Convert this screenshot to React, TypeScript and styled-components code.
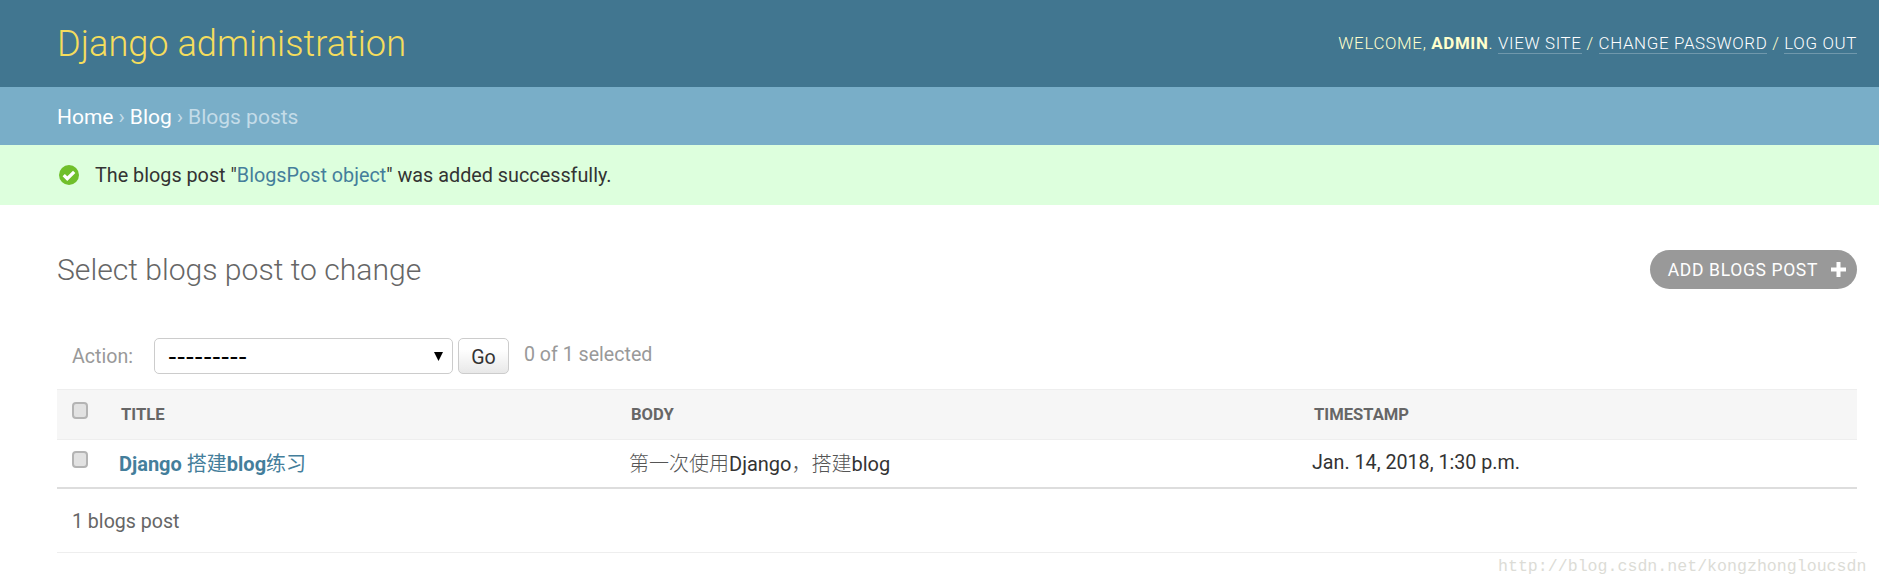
import React from 'react'
import styled, { createGlobalStyle } from 'styled-components'

const GlobalStyle = createGlobalStyle`
  html, body {
    margin: 0;
    padding: 0;
    background: #fff;
    color: #333;
    font-family: Roboto, "Noto Sans CJK SC", sans-serif;
    font-size: 19.6px;
  }
`

const Page = styled.div`
  position: relative;
  height: 588px;
  overflow: hidden;
`

const Header = styled.div`
  display: flex;
  justify-content: space-between;
  align-items: center;
  height: 87px;
  padding: 0 22px 0 57px;
  background: #417690;
`

const Branding = styled.h1`
  margin: 0;
  font-size: 36.2px;
  font-weight: 300;
  color: #f5dd5d;
`

const UserTools = styled.div`
  margin-top: -2px;
  font-size: 16.9px;
  font-weight: 300;
  letter-spacing: 0.65px;
  color: #ffc;
  text-transform: uppercase;

  strong {
    font-weight: 700;
  }
`

const ToolLink = styled.a`
  color: #fff;
  border-bottom: 1px solid rgba(255, 255, 255, 0.25);
`

const Breadcrumbs = styled.div`
  height: 58px;
  padding: 2px 57px 0;
  box-sizing: border-box;
  display: flex;
  align-items: center;
  gap: 5px;
  background: #79aec8;
  font-size: 21px;
  color: #c4dce8;
`

const Crumb = styled.a`
  color: #fff;
`

const Message = styled.div`
  display: flex;
  align-items: center;
  gap: 16px;
  height: 60px;
  padding: 0 57px 0 59px;
  background: #dfd;
  font-size: 19.8px;
  color: #333;

  a {
    color: #447e9b;
  }
`

const Content = styled.div`
  padding: 45px 22px 0 57px;
`

const TitleRow = styled.div`
  display: flex;
  justify-content: space-between;
  align-items: center;
  height: 39px;
`

const PageTitle = styled.h2`
  margin: 0;
  font-size: 30.1px;
  font-weight: 300;
  color: #666;
`

const AddButton = styled.a`
  display: flex;
  align-items: center;
  gap: 13px;
  height: 39px;
  padding: 0 11px 0 18px;
  box-sizing: border-box;
  border-radius: 20px;
  background: #999;
  color: #fff;
  font-size: 17.5px;
  letter-spacing: 0.65px;
  text-transform: uppercase;
`

const Actions = styled.div`
  display: flex;
  align-items: center;
  height: 36px;
  margin-top: 49px;
  padding-left: 15px;
  color: #999;
`

const ActionLabel = styled.span`
  width: 82px;
`

const SelectBox = styled.div`
  display: flex;
  align-items: center;
  justify-content: space-between;
  width: 299px;
  height: 36px;
  box-sizing: border-box;
  padding: 0 9px 0 13px;
  border: 1px solid #ccc;
  border-radius: 5px;
  color: #000;
  font-family: "Liberation Sans", sans-serif;
  font-size: 26.4px;
  line-height: 1;
`

const GoButton = styled.button`
  width: 51px;
  height: 36px;
  margin-left: 5px;
  padding: 2px 0 0;
  border: 1px solid #ccc;
  border-radius: 5px;
  background: linear-gradient(#fff 30%, #e8e8e8);
  color: #333;
  font-family: inherit;
  font-size: 19.6px;
`

const Counter = styled.span`
  margin-left: 15px;
  margin-top: -4px;
`

const Table = styled.table`
  width: 100%;
  margin-top: 15px;
  border-collapse: collapse;
  table-layout: fixed;
`

const HeadRow = styled.tr`
  height: 50px;
  background: #f6f6f6;
  border-top: 1px solid #eee;
  border-bottom: 1px solid #eee;
`

const BodyRow = styled.tr`
  height: 48px;
  border-bottom: 2px solid #ddd;
`

const Th = styled.th<{ $width?: number }>`
  ${p => (p.$width ? `width: ${p.$width}px;` : '')}
  box-sizing: border-box;
  padding: 0 0 0 2px;
  text-align: left;
  font-size: 16.6px;
  font-weight: 700;
  color: #666;
  text-transform: uppercase;
`

const CheckCell = styled.td`
  width: 62px;
  padding: 0 0 8px 15px;
  box-sizing: border-box;
`

const Td = styled.td<{ $size?: number }>`
  padding: 0 0 2px;
  font-size: ${p => p.$size ?? 20}px;
  color: #333;
`

const TitleLink = styled.a`
  color: #447e9b;
  font-weight: 700;
`

const ThinText = styled.span`
  font-weight: 400;
`

const CjkText = styled.span`
  color: #555;
  font-weight: 300;
`

const Checkbox = styled.span`
  display: block;
  width: 16px;
  height: 17px;
  box-sizing: border-box;
  border: 2px solid #b4b4b4;
  border-radius: 4px;
  background: #e2e2e2;
`

const Paginator = styled.p`
  display: flex;
  align-items: center;
  height: 64px;
  margin: 0;
  padding: 2px 0 0 15px;
  box-sizing: border-box;
  border-bottom: 1px solid #eee;
  color: #666;
`

const Watermark = styled.span`
  position: absolute;
  left: 1498px;
  top: 557px;
  font-family: "Liberation Mono", monospace;
  font-size: 16.6px;
  color: #dcdcd6;
`

function Home() {
  return (
    <Page>
      <GlobalStyle />
      <Header>
        <Branding>Django administration</Branding>
        <UserTools>
          Welcome, <strong>admin</strong>. <ToolLink>View site</ToolLink> / <ToolLink>Change password</ToolLink> /{' '}
          <ToolLink>Log out</ToolLink>
        </UserTools>
      </Header>
      <Breadcrumbs>
        <Crumb>Home</Crumb> › <Crumb>Blog</Crumb> › <span>Blogs posts</span>
      </Breadcrumbs>
      <Message>
        <svg width="20" height="20" viewBox="0 0 22 22">
          <circle cx="11" cy="11" r="11" fill="#70bf2b" />
          <path d="M5.2 11.2l3.9 3.9 7.6-7.6" fill="none" stroke="#fff" strokeWidth="3.6" />
        </svg>
        <span>
          The blogs post "<a>BlogsPost object</a>" was added successfully.
        </span>
      </Message>
      <Content>
        <TitleRow>
          <PageTitle>Select blogs post to change</PageTitle>
          <AddButton>
            Add blogs post
            <svg width="15" height="15" viewBox="0 0 15 15">
              <path d="M7.5 0v15M0 7.5h15" stroke="#fff" strokeWidth="4" />
            </svg>
          </AddButton>
        </TitleRow>
        <Actions>
          <ActionLabel>Action:</ActionLabel>
          <SelectBox>
            ---------
            <svg width="9" height="9" viewBox="0 0 9 9">
              <path d="M0 0h9L4.5 9z" fill="#000" />
            </svg>
          </SelectBox>
          <GoButton>Go</GoButton>
          <Counter>0 of 1 selected</Counter>
        </Actions>
        <Table>
          <thead>
            <HeadRow>
              <CheckCell>
                <Checkbox />
              </CheckCell>
              <Th $width={510}>Title</Th>
              <Th $width={683}>Body</Th>
              <Th>Timestamp</Th>
            </HeadRow>
          </thead>
          <tbody>
            <BodyRow>
              <CheckCell>
                <Checkbox />
              </CheckCell>
              <Td>
                <TitleLink>
                  Django <ThinText>搭建</ThinText>blog<ThinText>练习</ThinText>
                </TitleLink>
              </Td>
              <Td>
                <CjkText>第一次使用</CjkText>Django<CjkText>，搭建</CjkText>blog
              </Td>
              <Td $size={19.7}>Jan. 14, 2018, 1:30 p.m.</Td>
            </BodyRow>
          </tbody>
        </Table>
        <Paginator>1 blogs post</Paginator>
      </Content>
      <Watermark>http://blog.csdn.net/kongzhongloucsdn</Watermark>
    </Page>
  )
}

export default Home
